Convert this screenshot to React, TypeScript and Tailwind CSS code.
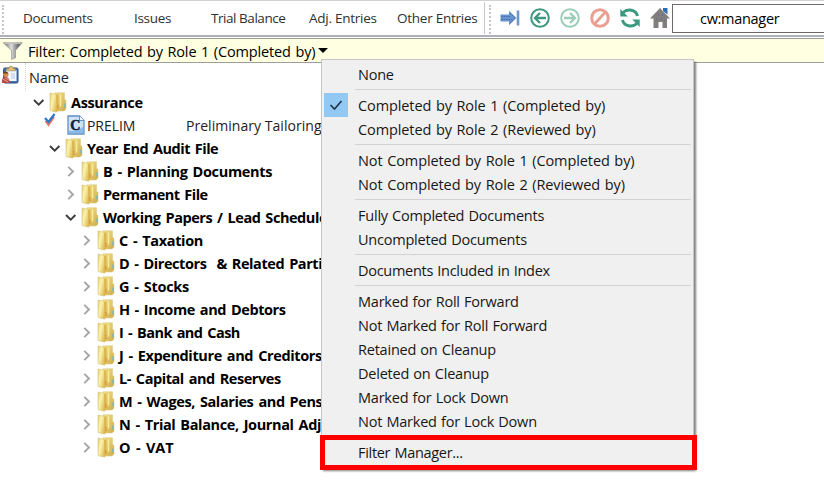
import React from "react";

const font = "font-['Open_Sans','Noto_Sans',sans-serif]";

function Funnel() {
  return (
    <svg width="20" height="18" viewBox="0 0 20 18" className="shrink-0">
      <defs>
        <linearGradient id="funnel" x1="0" x2="1">
          <stop offset="0" stopColor="#5f5f5f" />
          <stop offset=".42" stopColor="#dedede" />
          <stop offset=".75" stopColor="#777" />
          <stop offset="1" stopColor="#5a5a5a" />
        </linearGradient>
      </defs>
      <path d="M.3 .8h18.900l-6.700 7.700v7.300l-4 1.700V8.500z" fill="url(#funnel)" stroke="#8c8c8c" strokeWidth=".6" />
      <path d="M1.500 1.400h16.500" stroke="#c4c4c4" />
    </svg>
  );
}

function Clipboard() {
  return (
    <svg width="18" height="20" viewBox="0 0 18 20" className="shrink-0">
      <rect x="2.500" y="3" width="14.500" height="15" rx="1.500" fill="#4a74ae" stroke="#274a7d" />
      <path d="M5 5h10.500v11H5z" fill="#f0f5fc" />
      <path d="M5.500 3.500h2.200a2.300 2.300 0 0 1 4.600 0h2.200v2.300h-9z" fill="#e0c270" stroke="#8d7846" strokeWidth=".6" />
      <path d="M10 9h4M10 11h4M10 13h4" stroke="#b4c8e4" />
      <circle cx="4.800" cy="9.500" r="2.700" fill="#d58a45" />
      <path d="M2.200 8.500a2.600 2.600 0 0 1 5 0z" fill="#70401f" />
      <path d="M1 18c-.5-4 1-6 3.500-6S9 14 8.500 18z" fill="#bb4a42" />
      <path d="M2 14l5 3M4 13l4 2" stroke="#efb0a0" strokeWidth=".8" />
    </svg>
  );
}

function Folder() {
  return (
    <svg width="18" height="21" viewBox="0 0 18 21" className="shrink-0">
      <defs>
        <linearGradient id="leaf" x1="0" x2="1" y2=".6">
          <stop offset="0" stopColor="#e6cf74" />
          <stop offset=".45" stopColor="#fbf3ac" />
          <stop offset="1" stopColor="#dcc05c" />
        </linearGradient>
        <linearGradient id="back" x1="0" x2="1" y2="1">
          <stop offset="0" stopColor="#f3e38c" />
          <stop offset="1" stopColor="#cfab48" />
        </linearGradient>
      </defs>
      <path d="M6 .8h9.500v6.500l1.500 1v9l-2 1.700H6z" fill="url(#back)" stroke="#dccb8a" strokeWidth=".6" />
      <path d="M1 1l5.500 1.200 1.500 1V20l-2-.2L1 18.500z" fill="url(#leaf)" stroke="#d5bf6b" strokeWidth=".6" />
      <path d="M7 3l2.500-.8V18L7 20z" fill="#dcb852" />
      <path d="M8.800 13v4.500" stroke="#d97d35" strokeDasharray="1.500 .8" />
      <path d="M11.500 2.500v12" stroke="#f7eb9c" strokeWidth="1.500" />
      <path d="M16 11.500v4" stroke="#67b5cf" strokeWidth="1.200" />
    </svg>
  );
}

function DocIcon() {
  return (
    <svg width="18" height="20" viewBox="0 0 18 20" className="shrink-0">
      <path d="M1 1h11.500L17 5.500V19H1z" fill="#cfe3f6" stroke="#5f8fc6" strokeWidth="1.300" />
      <path d="M12.500 1v4.500H17" fill="#f7fbff" stroke="#5f8fc6" />
      <path d="M2 15.500c5 1 10 0 14-4v6.700H2z" fill="#8bbae8" />
      <text x="8.300" y="14.500" textAnchor="middle" fontSize="14" fontWeight="bold" className="font-['Liberation_Serif',serif]" fill="#10203f" stroke="#10203f" strokeWidth=".5">C</text>
    </svg>
  );
}

function Chevron({ open }: { open?: boolean }) {
  return (
    <svg width="12" height="12" viewBox="0 0 12 12" className="shrink-0" fill="none">
      {open ? (
        <path d="M1 3l4.700 4.700L10.400 3" stroke="#3d3d3d" strokeWidth="1.900" />
      ) : (
        <path d="M3.300 .8L8 5.500l-4.700 4.700" stroke="#a5a5a5" strokeWidth="1.900" />
      )}
    </svg>
  );
}

function DoubleCheck() {
  return (
    <svg width="12" height="14" viewBox="0 0 12 14" className="mb-[11px] shrink-0" fill="none">
      <path d="M1.500 8l3 4 5.500-8" stroke="#ee7068" strokeWidth="2" />
      <path d="M1 5l3.500 4L10.500 1" stroke="#2878c8" strokeWidth="2.200" />
    </svg>
  );
}

function NavIcons() {
  return (
    <div className="flex items-center gap-[10px] pl-[8px]">
      <svg width="20" height="20" viewBox="0 0 20 20" className="shrink-0">
        <path d="M.5 6.500H9V2.800l7.500 7.200L9 17.200v-3.700H.5z" fill="#6a93cc" />
        <path d="M1 8.500h9M1 11.500h11M10 5l5 5-5 5" stroke="#4370b3" strokeDasharray="1.500 1" fill="none" />
        <path d="M18 2.500v15" stroke="#7096c8" strokeWidth="2.600" />
      </svg>
      <svg width="20" height="20" viewBox="0 0 20 20" className="shrink-0" fill="none" stroke="#40977f">
        <circle cx="10" cy="10" r="8.800" strokeWidth="2" />
        <path d="M16 10H5.500M10 5l-5 5 5 5" strokeWidth="2.300" />
      </svg>
      <svg width="20" height="20" viewBox="0 0 20 20" className="shrink-0" fill="none" stroke="#9bcdb8">
        <circle cx="10" cy="10" r="8.800" strokeWidth="2" />
        <path d="M4 10h10.500M10 5l5 5-5 5" strokeWidth="2.300" />
      </svg>
      <svg width="20" height="20" viewBox="0 0 20 20" className="shrink-0" fill="none" stroke="#e9a093">
        <circle cx="10" cy="10" r="8.300" strokeWidth="3" />
        <path d="M15 4.500L5 15.500" strokeWidth="2.800" />
      </svg>
      <svg width="20" height="20" viewBox="0 0 20 20" className="shrink-0" fill="none" stroke="#399a80" strokeWidth="3">
        <path d="M17.500 8C16 1.500 7.500 .3 3 4.500M2.500 12c1.500 6.500 10 7.700 14.500 3.500" />
        <path d="M.3 1v7.500h7.500zM19.700 19v-7.500h-7.500z" fill="#399a80" stroke="none" />
      </svg>
      <svg width="20" height="20" viewBox="0 0 20 20" className="shrink-0">
        <path d="M13 0h4.500v6.500L13 3z" fill="#2c6eb6" />
        <path d="M10 0l10 10.500h-3V20h-4.500v-6h-4v6H3.500v-9.500H0z" fill="#817e7d" />
        <path d="M8 7h1M12 7h1M6 11h1M11 11h1M14 12h1" stroke="#4865a4" />
      </svg>
    </div>
  );
}

const tabs = [
  { label: "Documents", cls: "w-[125px] pl-[14px] tracking-[-0.3px]" },
  { label: "Issues", cls: "w-[77px] tracking-[-0.3px]" },
  { label: "Trial Balance", cls: "w-[98px] tracking-[-0.45px]" },
  { label: "Adj. Entries", cls: "w-[88px] tracking-[-0.25px]" },
  { label: "Other Entries", cls: "w-[87px] tracking-[-0.25px]" },
];

const tree = [
  { label: "B - Planning Documents", pad: "pl-[65px]", ls: "tracking-[-0.34px]" },
  { label: "Permanent File", pad: "pl-[65px]", ls: "tracking-[-0.52px]" },
  { label: "Working Papers / Lead Schedule", pad: "pl-[65px]", open: true, ls: "tracking-[-0.45px]" },
  { label: "C - Taxation", pad: "pl-[81px]", ls: "tracking-[-0.35px]" },
  { label: "D - Directors  & Related Parti", pad: "pl-[81px]", ls: "tracking-[-0.42px]" },
  { label: "G - Stocks", pad: "pl-[81px]", ls: "tracking-[-0.28px]" },
  { label: "H - Income and Debtors", pad: "pl-[81px]", ls: "tracking-[-0.42px]" },
  { label: "I - Bank and Cash", pad: "pl-[81px]", ls: "tracking-[-0.55px]" },
  { label: "J - Expenditure and Creditors", pad: "pl-[81px]", ls: "tracking-[-0.38px]" },
  { label: "L- Capital and Reserves", pad: "pl-[81px]", ls: "tracking-[-0.45px]" },
  { label: "M - Wages, Salaries and Pens", pad: "pl-[81px]", ls: "tracking-[-0.4px]" },
  { label: "N - Trial Balance, Journal Adj", pad: "pl-[81px]", ls: "tracking-[-0.38px]" },
  { label: "O - VAT", pad: "pl-[81px]", ls: "tracking-[0px]" },
];

function FolderRow({ label, pad, open, ls }: { label: string; pad: string; open?: boolean; ls: string }) {
  return (
    <div className={`flex h-[23px] items-center text-[14.5px] font-bold ${pad}`}>
      <Chevron open={open} />
      <span className="mb-px ml-[4px] flex"><Folder /></span>
      <span className={`ml-[4px] whitespace-pre [word-spacing:1.6px] ${ls}`}>{label}</span>
    </div>
  );
}

const plain = "tracking-[-0.22px] [word-spacing:0.7px]";
const wide = "tracking-[-0.1px] [word-spacing:1px]";

const groups = [
  [{ t: "None", ls: plain }],
  [
    { t: "Completed by Role 1 (Completed by)", ls: wide, checked: true },
    { t: "Completed by Role 2 (Reviewed by)", ls: wide },
  ],
  [
    { t: "Not Completed by Role 1 (Completed by)", ls: wide },
    { t: "Not Completed by Role 2 (Reviewed by)", ls: wide },
  ],
  [
    { t: "Fully Completed Documents", ls: plain },
    { t: "Uncompleted Documents", ls: plain },
  ],
  [{ t: "Documents Included in Index", ls: "tracking-[-0.28px] [word-spacing:0.7px]" }],
  [
    { t: "Marked for Roll Forward", ls: plain },
    { t: "Not Marked for Roll Forward", ls: plain },
    { t: "Retained on Cleanup", ls: plain },
    { t: "Deleted on Cleanup", ls: plain },
    { t: "Marked for Lock Down", ls: plain },
    { t: "Not Marked for Lock Down", ls: plain },
  ],
  [{ t: "Filter Manager...", ls: "tracking-[-0.3px] [word-spacing:0.7px]" }],
] as { t: string; ls: string; checked?: boolean }[][];

function Menu() {
  return (
    <div className="absolute top-[59px] left-[321px] h-[409px] w-[373px] border border-[#c6c6c6] bg-[#f0f0f0] pt-[2px] pl-[2px] shadow-[2px_3px_2px_rgba(0,0,0,0.5)]">
      {groups.map((items, g) => (
        <div key={g}>
          {g > 0 && g < groups.length - 1 && (
            <div className="flex h-[7px] items-center pr-[2px] pl-[31px]">
              <div className="h-px w-full bg-[#d2d2d2]" />
            </div>
          )}
          {g === groups.length - 1 && <div className="h-[7px]" />}
          {items.map((it) => (
            <div key={it.t} className="flex h-6 items-center text-[14.5px] text-[#171717]">
              <div className={`mr-[10px] flex size-6 items-center justify-center ${it.checked ? "bg-[#91c9f3]" : ""}`}>
                {it.checked && (
                  <svg width="14" height="12" viewBox="0 0 14 12" fill="none">
                    <path d="M1.500 6l4 4 7-8" stroke="#20304a" strokeWidth="1.600" />
                  </svg>
                )}
              </div>
              <span className={`pt-[2px] whitespace-nowrap ${it.ls}`}>{it.t}</span>
            </div>
          ))}
        </div>
      ))}
    </div>
  );
}

export default function App() {
  return (
    <div className={`relative h-[503px] w-[824px] overflow-hidden bg-white text-black ${font}`}>
      <div className="flex h-[37px] border-t border-b-2 border-t-[#d2d2d2] border-b-[#b0b0b8] text-[13.5px] text-[#303030]">
        <div className="mt-1 ml-[2px] h-[29px] border-l-2 border-dotted border-[#c5c5c5]" />
        <div className="flex items-center pl-[5px]">
          {tabs.map((t) => (
            <div key={t.label} className={`shrink-0 pt-px whitespace-nowrap ${t.cls}`}>{t.label}</div>
          ))}
        </div>
        <div className="flex">
          <div className="mt-px h-[32px] w-px bg-[#c9c9c9]" />
        </div>
        <div className="mt-1 ml-[4px] h-[29px] border-l-2 border-dotted border-[#c5c5c5]" />
        <div className="ml-px flex"><NavIcons /></div>
        <div className="mt-[3px] ml-[2px] flex h-[29px] flex-1 items-center border border-r-0 border-[#706b68] pl-[27px] text-[14.5px] text-black">
          <span className="pt-px tracking-[-0.3px]">cw:manager</span>
        </div>
      </div>
      <div className="mt-px flex h-[25px] items-center border-y border-[#9d9d9d] bg-[#ffffe1] pl-[3px] text-[14.5px]">
        <Funnel />
        <span className="ml-[5px] pt-[2px] tracking-[-0.14px] whitespace-nowrap [word-spacing:1px]">Filter: Completed by Role 1 (Completed by)</span>
        <svg width="10" height="5" viewBox="0 0 10 5" className="mb-px ml-[3px]"><path d="M0 0h10L5 5z" /></svg>
      </div>
      <div className="flex h-[28px] items-center pl-px text-[14.5px] text-[#222]">
        <span className="mb-1"><Clipboard /></span>
        <div className="ml-[6px] h-full border-l border-dotted border-[#d4d4d4]" />
        <span className="ml-[3px] pt-[2px] tracking-[-0.2px]">Name</span>
      </div>
      <div>
        <FolderRow label="Assurance" pad="pl-[33px]" open ls="tracking-[-0.35px]" />
        <div className="flex h-[23px] items-center pl-[44px] text-[14px] text-[#222]">
          <DoubleCheck />
          <span className="mb-[2px] ml-[11px]"><DocIcon /></span>
          <span className="ml-[2px] w-[99px] shrink-0 tracking-[-0.05px]">PRELIM</span>
          <span className="tracking-[0.04px] whitespace-nowrap">Preliminary Tailoring</span>
        </div>
        <FolderRow label="Year End Audit File" pad="pl-[49px]" open ls="tracking-[-0.5px]" />
        {tree.map((r) => (
          <FolderRow key={r.label} {...r} />
        ))}
      </div>
      <Menu />
      <div className="absolute top-[435px] left-[320px] h-[35px] w-[377px] border-[5px] border-[#fe0000]" />
    </div>
  );
}
